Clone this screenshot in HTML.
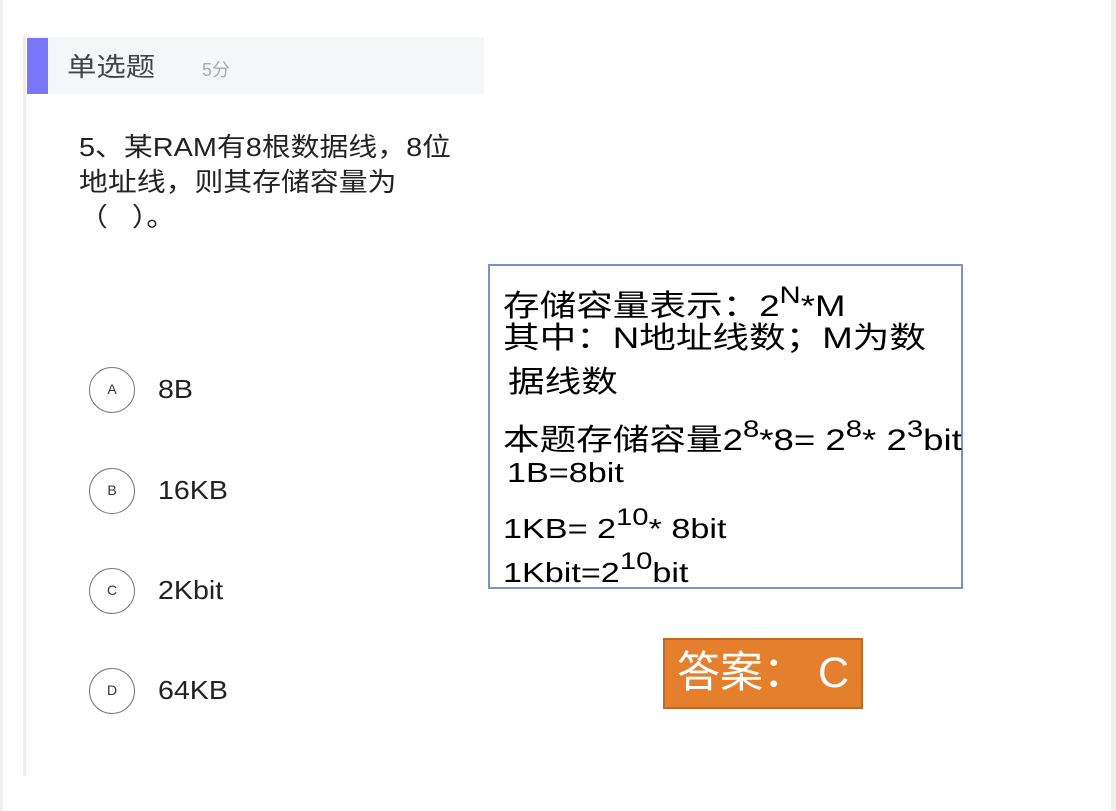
<!DOCTYPE html>
<html><head><meta charset="utf-8"><style>
*{margin:0;padding:0;box-sizing:border-box}
body{width:1116px;height:811px;background:#fff;position:relative;overflow:hidden;font-family:"Liberation Sans","Noto Sans CJK SC",sans-serif;color:#000}
.a{position:absolute;white-space:nowrap}
.l{font-size:30px;line-height:34px;left:503px;transform:scaleX(1.22);transform-origin:0 0}
sup{font-size:24px;position:relative;top:-6px;vertical-align:top;line-height:1}
.c{position:absolute;left:89px;width:46px;height:46px;border:1.5px solid #777;border-radius:50%;font-size:14px;text-align:center;line-height:43px;color:#333}
.o{position:absolute;left:158px;font-size:26px;line-height:30px;color:#222;transform:scaleX(1.1);transform-origin:0 0}
</style></head><body>
<div class="a" style="left:0;top:0;width:3px;height:811px;background:#f0f0f0"></div>
<div class="a" style="left:1111px;top:0;width:5px;height:811px;background:#f0f0f0"></div>
<div class="a" style="left:23px;top:36px;width:3px;height:740px;background:#eeeeee"></div>
<div class="a" style="left:27px;top:37px;width:457px;height:57px;background:#f5f6f8"></div>
<div class="a" style="left:27px;top:38px;width:21px;height:56px;background:#7b76f7"></div>
<div class="a" style="left:67px;top:51px;font-size:26px;line-height:32px;color:#444;transform:scaleX(1.13);transform-origin:0 0">单选题</div>
<div class="a" style="left:202px;top:58px;font-size:18px;line-height:24px;color:#aaa">5分</div>
<div class="a" style="left:79px;top:130px;font-size:26px;line-height:35px;color:#222;transform:scaleX(1.11);transform-origin:0 0">5、某RAM有8根数据线，8位<br>地址线，则其存储容量为<br>（&nbsp;&nbsp;&nbsp;）。</div>
<div class="c" style="top:367px">A</div><div class="o" style="top:374px">8B</div>
<div class="c" style="top:468px">B</div><div class="o" style="top:475px">16KB</div>
<div class="c" style="top:568px">C</div><div class="o" style="top:575px">2Kbit</div>
<div class="c" style="top:668px">D</div><div class="o" style="top:675px">64KB</div>
<div class="a" style="left:488px;top:264px;width:475px;height:325px;border:2px solid #7a8fd6"></div>
<div class="a l" style="top:290px">存储容量表示：2<sup>N</sup>*M</div>
<div class="a l" style="top:322px">其中：N地址线数；M为数</div>
<div class="a l" style="top:366px;left:508px">据线数</div>
<div class="a l" style="top:424px">本题存储容量2<sup>8</sup>*8= 2<sup>8</sup>* 2<sup>3</sup>bit</div>
<div class="a l" style="top:456px;left:507px;font-size:28px">1B=8bit</div>
<div class="a l" style="top:512px;font-size:28px">1KB= 2<sup>10</sup>* 8bit</div>
<div class="a l" style="top:556px;font-size:28px">1Kbit=2<sup>10</sup>bit</div>
<div class="a" style="left:663px;top:638px;width:200px;height:71px;background:#e47f2e;border:2px solid #c0692a;color:#fff;font-size:43px;line-height:66px;padding-left:12px;overflow:hidden">答案：&nbsp;C</div>
</body></html>
